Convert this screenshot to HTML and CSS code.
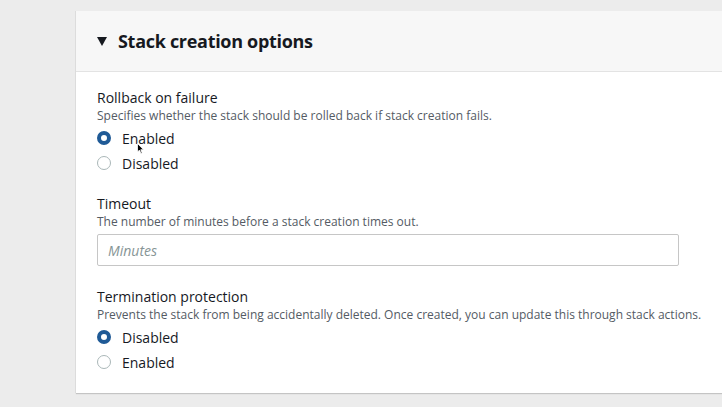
FILE: index.html
```html
<!DOCTYPE html>
<html>
<head>
<meta charset="utf-8">
<link rel="stylesheet" href="styles.css">
</head>
<body>
<div class="page">
  <section class="card">
    <header class="card-header">
      <span class="caret"></span>
      <h2>Stack creation options</h2>
    </header>
    <div class="card-body">
      <div class="field">
        <div class="label">Rollback on failure</div>
        <div class="desc">Specifies whether the stack should be rolled back if stack creation fails.</div>
        <div class="radios">
          <div class="radio-row"><span class="radio checked"></span><span class="rlabel">Enabled</span></div>
          <div class="radio-row"><span class="radio"></span><span class="rlabel">Disabled</span></div>
        </div>
      </div>
      <div class="field">
        <div class="label">Timeout</div>
        <div class="desc">The number of minutes before a stack creation times out.</div>
        <div class="input"><span class="placeholder">Minutes</span></div>
      </div>
      <div class="field">
        <div class="label">Termination protection</div>
        <div class="desc">Prevents the stack from being accidentally deleted. Once created, you can update this through stack actions.</div>
        <div class="radios">
          <div class="radio-row"><span class="radio checked"></span><span class="rlabel">Disabled</span></div>
          <div class="radio-row"><span class="radio"></span><span class="rlabel">Enabled</span></div>
        </div>
      </div>
    </div>
  </section>
  <svg class="cursor" width="8" height="12" viewBox="0 0 8 12"><path d="M0.5 0.5 L0.5 9 L2.5 7 L4 10.5 L5.2 10 L3.8 6.7 L6.5 6.7 Z" fill="#000" stroke="#fff" stroke-width="0.8"/></svg>
</div>
</body>
</html>
```

FILE: styles.css
```css
html, body {
  margin: 0;
  padding: 0;
}
body {
  background: #ececec;
  font-family: "Open Sans", "Liberation Sans", sans-serif;
  color: #16191f;
  width: 722px;
  height: 407px;
  overflow: hidden;
}
.page {
  position: relative;
  padding: 11px 0 0 76px;
}
.card {
  width: 700px;
  background: #fff;
  box-shadow: -1px 0 0 #dcdcdc, 0 1px 1px #c4c4c4;
}
.card-header {
  height: 60px;
  background: #f7f7f7;
  border-bottom: 1px solid #e3e3e3;
  display: flex;
  align-items: center;
  padding-left: 21px;
}
.caret {
  width: 0;
  height: 0;
  border-left: 5px solid transparent;
  border-right: 5px solid transparent;
  border-top: 9px solid #16191f;
  margin-right: 11px;
  margin-top: 1px;
}
.card-header h2 {
  margin: 0;
  font-size: 18px;
  font-weight: 700;
  letter-spacing: -0.3px;
}
.card-body {
  padding: 16px 0 21px 21px;
  display: flex;
  flex-direction: column;
  gap: 21px;
}
.label {
  font-size: 14px;
  line-height: 20px;
}
.desc {
  font-size: 12px;
  line-height: 16px;
  color: #545b64;
}
.radios {
  margin-top: 4px;
  display: flex;
  flex-direction: column;
  gap: 5px;
}
.radio-row {
  display: flex;
  align-items: center;
  height: 20px;
}
.radio {
  box-sizing: border-box;
  width: 14px;
  height: 14px;
  border-radius: 50%;
  border: 1px solid #aab7b8;
  background: #fff;
  margin-right: 11px;
}
.radio.checked {
  border: 4px solid #1f5a96;
}
.rlabel {
  font-size: 14px;
}
.input {
  margin-top: 4px;
  box-sizing: border-box;
  width: 582px;
  height: 32px;
  border: 1px solid #c6c6c6;
  border-radius: 2px;
  display: flex;
  align-items: center;
  padding-left: 10px;
}
.placeholder {
  font-size: 14px;
  font-style: italic;
  color: #879596;
}
.cursor {
  position: absolute;
  left: 137px;
  top: 143px;
}
```
